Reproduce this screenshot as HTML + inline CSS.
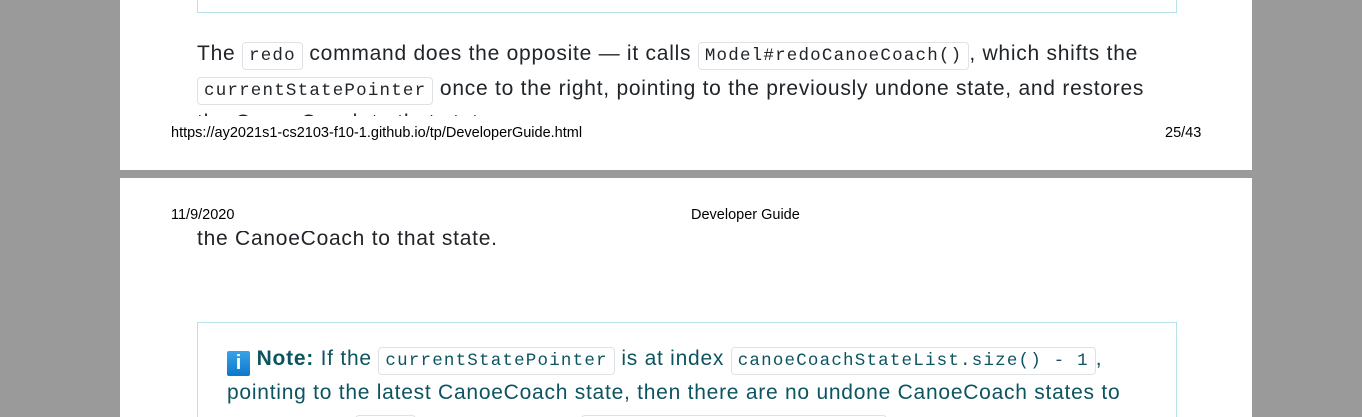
<!DOCTYPE html>
<html><head><meta charset="utf-8"><style>
body{margin:0;width:1362px;height:417px;background:#9a9a9a;position:relative;overflow:hidden;font-family:"Liberation Sans",sans-serif;}
.page{position:absolute;left:120px;width:1132px;background:#fff;overflow:hidden}
.t{position:absolute;left:77px;font-size:21px;color:#212529;white-space:nowrap;letter-spacing:0.75px}
code{font-family:"Liberation Mono",monospace;font-size:17.5px;border:1px solid #dee2e6;border-radius:4px;padding:3px 6px;background:#fff;color:#212529;letter-spacing:1.2px}
.small{position:absolute;font-size:14.5px;color:#000;white-space:nowrap}
.box{position:absolute;left:77px;width:978px;border:1px solid #b8e2ea;}
.note{color:#0c5460}
.note code{color:#0c5460}
</style></head><body>
<div class="page" style="top:0;height:170px">
  <div class="box" style="top:-10px;height:22px;border-top:none"></div>
  <div class="t" style="top:42px">The <code>redo</code> command does the opposite — it calls <code>Model#redoCanoeCoach()</code>, which shifts the</div>
  <div class="t" style="top:77px"><code>currentStatePointer</code> once to the right, pointing to the previously undone state, and restores</div>
  <div style="position:absolute;top:0;left:0;width:100%;height:116px;overflow:hidden"><div class="t" style="top:111px">the CanoeCoach to that state.</div></div>
  <div class="small" style="left:51px;top:125px">https://ay2021s1-cs2103-f10-1.github.io/tp/DeveloperGuide.html</div>
  <div class="small" style="left:1045px;top:125px">25/43</div>
</div>
<div class="page" style="top:178px;height:239px">
  <div class="small" style="left:51px;top:29px">11/9/2020</div>
  <div class="small" style="left:571px;top:29px">Developer Guide</div>
  <div style="position:absolute;top:53px;left:0;width:100%;height:40px;overflow:hidden"><div class="t" style="top:-4px">the CanoeCoach to that state.</div></div>
  <div class="box" style="top:144px;height:120px"></div>
  <div class="t note" style="left:107px;top:169px"><span style="display:inline-block;width:23px;height:25px;background:linear-gradient(#3aa3e8,#0a78cc);color:#fff;font-weight:bold;text-align:center;font-size:20px;line-height:25px;vertical-align:-4px;border-radius:2px;letter-spacing:0">i</span> <b>Note:</b> If the <code>currentStatePointer</code> is at index <code>canoeCoachStateList.size() - 1</code>,</div>
  <div class="t note" style="left:107px;top:203px">pointing to the latest CanoeCoach state, then there are no undone CanoeCoach states to</div>
  <div class="t note" style="left:107px;top:237px">restore. The <code>redo</code> command uses <code>Model#canRedoCanoeCoach()</code> to check</div>
</div>
</body></html>
